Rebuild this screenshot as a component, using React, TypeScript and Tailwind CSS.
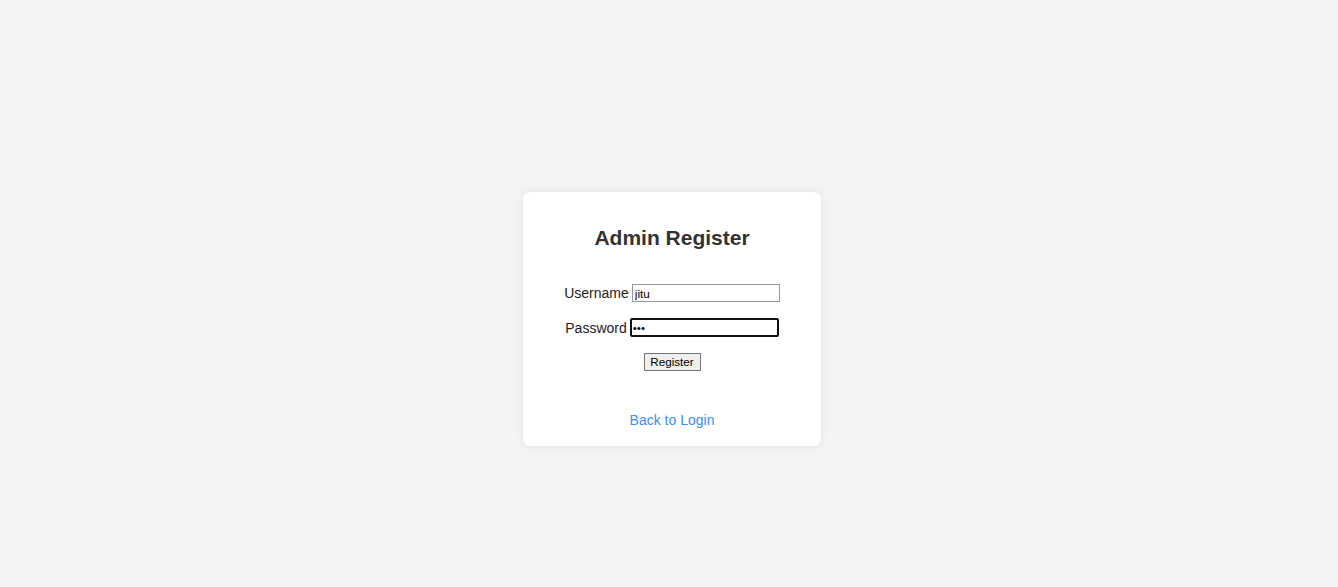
export default function App() {
  return (
    <main
      className="flex h-[587px] w-full items-start justify-center bg-[#f4f4f4] pt-[192px] pl-[6px]"
      style={{ fontFamily: '"Liberation Sans", Arial, sans-serif' }}
    >
      <div className="flex w-[298px] flex-col items-center rounded-[7px] bg-white px-[17px] pt-[17px] pb-[18px] shadow-[0_0_9px_rgba(0,0,0,0.08)]">
        <h2 className="mt-[17px] mb-[17px] text-[21px] font-bold leading-[24px] text-[#333]">
          Admin Register
        </h2>

        <form className="mt-[17px] flex flex-col items-center" onSubmit={(e) => e.preventDefault()}>
          <div className="flex items-center gap-[3px]">
            <label className="text-[14px] leading-[16px] text-[#222]">Username</label>
            <input
              type="text"
              defaultValue="jitu"
              className="h-[18px] w-[148px] border border-[#999] bg-white px-[2px] text-[11.7px] text-black outline-none"
            />
          </div>

          <div className="mt-[16px] flex items-center gap-[3px]">
            <label className="text-[14px] leading-[16px] text-[#222]">Password</label>
            <input
              type="password"
              defaultValue="abc"
              className="h-[19px] w-[149px] rounded-[2px] border-2 border-[#111] bg-white px-[1px] text-[11.7px] text-black outline-none"
            />
          </div>

          <button
            type="submit"
            className="mt-[16px] h-[18px] w-[57px] border border-[#767676] bg-[#efefef] text-[11.7px] leading-[14px] text-black"
          >
            Register
          </button>
        </form>

        <a href="#" className="mt-[41px] text-[14px] leading-[16px] text-[#3b8ef0]">
          Back to Login
        </a>
      </div>
    </main>
  );
}
